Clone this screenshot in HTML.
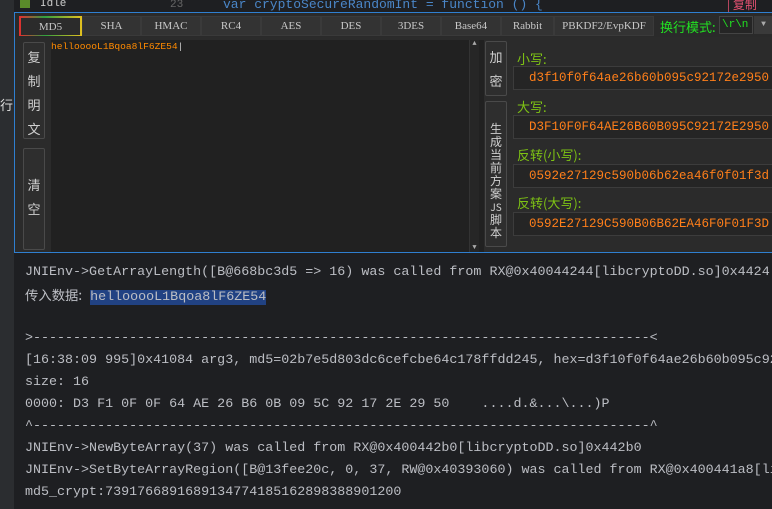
<!DOCTYPE html>
<html><head><meta charset="utf-8"><style>
*{margin:0;padding:0;box-sizing:border-box}
body{width:772px;height:509px;overflow:hidden;background:#1e1f22;position:relative;font-family:"Liberation Mono","Noto Sans CJK SC",monospace}
.a{position:absolute}
.top{left:0;top:0;width:772px;height:13px;background:#1e1f22}
.side{left:0;top:0;width:14px;height:509px;background:#2b2d30}
.win{left:14px;top:12px;width:758px;height:241px;border:1px solid #2f7fd0;border-right:none;background:#2b2b2b}
.tab{top:3px;height:20px;background:#333;border:1px solid #3a3a3a;color:#c8c8c8;font-size:11px;line-height:19px;text-align:center;font-family:"Liberation Serif",serif}
.btn{background:#2e2e2e;border:1px solid #4a4a4a;border-radius:2px;color:#cfcfcf;font-size:13px;text-align:center;font-family:"Noto Sans CJK SC",sans-serif}
.lbl{color:#7ec314;font-size:13px;font-family:"Noto Sans CJK SC",sans-serif}
.box{left:498px;width:260px;height:24px;background:#252525;border:1px solid #3c3c3c;color:#ff7f1a;font-size:12.5px;line-height:22px;padding-left:15px;font-family:"Liberation Mono",monospace;white-space:nowrap;overflow:hidden}
.con{left:25px;color:#bcbec4;font-size:13.35px;line-height:22px;white-space:pre}
</style></head><body>
<div class="a top"></div>
<div class="a" style="left:223px;top:0;color:#4a86c8;font-size:13px;line-height:10px;white-space:pre;overflow:hidden;height:12px">var cryptoSecureRandomInt = function () {</div>
<div class="a" style="left:170px;top:0;color:#666;font-size:11px;line-height:10px">23</div>
<div class="a" style="left:20px;top:0;width:10px;height:8px;background:#5a8a2a"></div>
<div class="a" style="left:40px;top:0;color:#ccc;font-size:11px;line-height:8px">Idle</div>
<div class="a" style="left:727px;top:0;color:#e05070;font-size:12px;line-height:10px;font-family:'Noto Sans CJK SC'">| 复制</div>
<div class="a side"></div>
<div class="a" style="left:0;top:95px;color:#ddd;font-size:13px;font-family:'Noto Sans CJK SC'">行</div>
<div class="a win">
  <div class="a" style="left:0;top:0;width:757px;height:24px;background:#2a2a2a"></div>
  <div class="a tab" style="left:4px;width:63px;background:#2b2b2b;border-top:2px solid;border-image:linear-gradient(90deg,#e03030 0%,#30a040 40%,#e0c020 100%) 1;border-left:2px solid #c03030;border-right:2px solid #20a0e0">MD5</div>
  <div class="a tab" style="left:67px;width:59px">SHA</div>
  <div class="a tab" style="left:126px;width:60px">HMAC</div>
  <div class="a tab" style="left:186px;width:60px">RC4</div>
  <div class="a tab" style="left:246px;width:60px">AES</div>
  <div class="a tab" style="left:306px;width:60px">DES</div>
  <div class="a tab" style="left:366px;width:60px">3DES</div>
  <div class="a tab" style="left:426px;width:60px">Base64</div>
  <div class="a tab" style="left:486px;width:53px">Rabbit</div>
  <div class="a tab" style="left:539px;width:100px">PBKDF2/EvpKDF</div>
  <div class="a" style="left:645px;top:4px;color:#22e022;font-size:13px;font-family:'Noto Sans CJK SC'">换行模式:</div>
  <div class="a" style="left:704px;top:3px;width:34px;height:18px;background:#252525;border:1px solid #444;color:#22e022;font-size:11px;line-height:16px;padding-left:2px">\r\n</div>
  <div class="a" style="left:739px;top:3px;width:19px;height:18px;background:#3a3a3a;color:#aaa;font-size:8px;line-height:18px;text-align:center">▼</div>
  <div class="a btn" style="left:8px;top:29px;width:22px;height:97px;padding-top:2px;line-height:24px">复<br>制<br>明<br>文</div>
  <div class="a btn" style="left:8px;top:135px;width:22px;height:102px;padding-top:24px;line-height:24px">清<br>空</div>
  <div class="a" style="left:36px;top:27px;width:433px;height:212px;background:#212121"></div>
  <div class="a" style="left:36px;top:28px;color:#ff8a00;font-size:9.6px;line-height:12px;font-family:'Liberation Mono',monospace">hellooooL1Bqoa8lF6ZE54<span style="color:#ccc">|</span></div>
  <div class="a" style="left:454px;top:27px;width:10px;height:212px;background:#262626;border-left:1px solid #333;color:#aaa;font-size:7px;text-align:center">▲<div style="position:absolute;bottom:0;width:100%">▼</div></div>
  <div class="a btn" style="left:470px;top:28px;width:22px;height:55px;line-height:24px;padding-top:3px">加<br>密</div>
  <div class="a btn" style="left:470px;top:88px;width:22px;height:146px;line-height:13px;font-size:12px;padding-top:20px">生<br>成<br>当<br>前<br>方<br>案<br><span style="font-size:10px">JS</span><br>脚<br>本</div>
  <div class="a lbl" style="left:502px;top:36px">小写:</div>
  <div class="a box" style="top:53px">d3f10f0f64ae26b60b095c92172e2950</div>
  <div class="a lbl" style="left:502px;top:84px">大写:</div>
  <div class="a box" style="top:102px">D3F10F0F64AE26B60B095C92172E2950</div>
  <div class="a lbl" style="left:502px;top:132px">反转(小写):</div>
  <div class="a box" style="top:151px">0592e27129c590b06b62ea46f0f01f3d</div>
  <div class="a lbl" style="left:502px;top:180px">反转(大写):</div>
  <div class="a box" style="top:199px">0592E27129C590B06B62EA46F0F01F3D</div>
</div>
<div class="a con" style="top:262px">JNIEnv-&gt;GetArrayLength([B@668bc3d5 =&gt; 16) was called from RX@0x40044244[libcryptoDD.so]0x4424</div>
<div class="a con" style="top:284px"><span style="font-family:'Noto Sans CJK SC'">传入数据:</span> <span style="background:#214283">hellooooL1Bqoa8lF6ZE54</span></div>
<div class="a con" style="top:328px">&gt;-----------------------------------------------------------------------------&lt;</div>
<div class="a con" style="top:350px">[16:38:09 995]0x41084 arg3, md5=02b7e5d803dc6cefcbe64c178ffdd245, hex=d3f10f0f64ae26b60b095c92</div>
<div class="a con" style="top:372px">size: 16</div>
<div class="a con" style="top:394px">0000: D3 F1 0F 0F 64 AE 26 B6 0B 09 5C 92 17 2E 29 50    ....d.&amp;...\...)P</div>
<div class="a con" style="top:416px">^-----------------------------------------------------------------------------^</div>
<div class="a con" style="top:438px">JNIEnv-&gt;NewByteArray(37) was called from RX@0x400442b0[libcryptoDD.so]0x442b0</div>
<div class="a con" style="top:460px">JNIEnv-&gt;SetByteArrayRegion([B@13fee20c, 0, 37, RW@0x40393060) was called from RX@0x400441a8[li</div>
<div class="a con" style="top:482px">md5_crypt:7391766891689134774185162898388901200</div>
</body></html>
